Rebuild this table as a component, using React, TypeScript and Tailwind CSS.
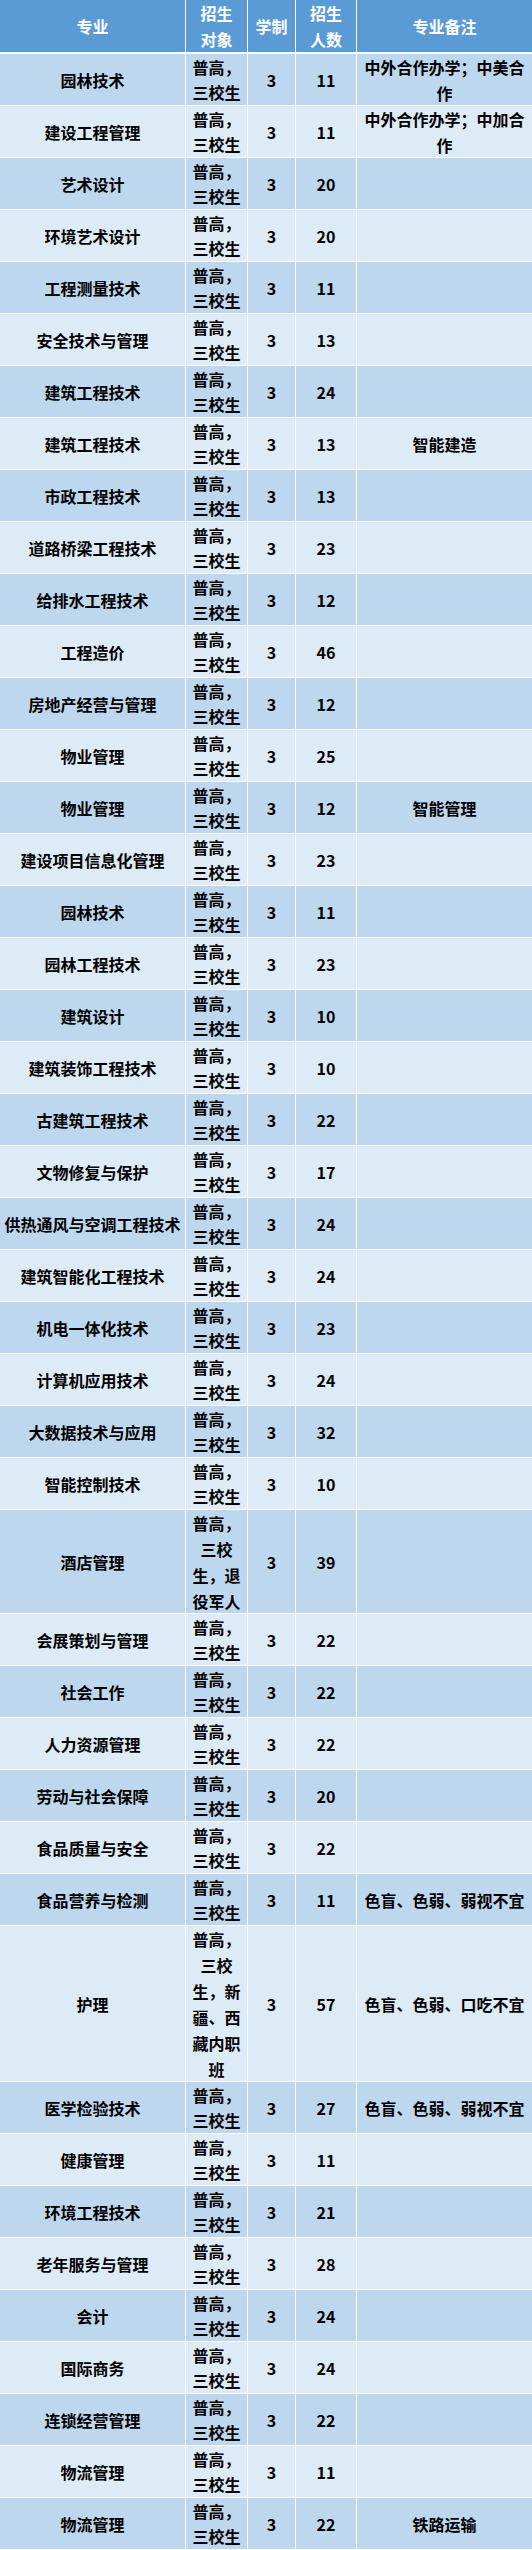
import React from "react";

type Row = {
    name: string;
    target?: string;
    years?: string;
    count: string;
    note?: string;
    size?: 1 | 2 | 3;
};

const DEFAULT_TARGET = "普高，三校生";

const rows: Row[] = [
    { name: "园林技术", count: "11", note: "中外合作办学；中美合作" },
    { name: "建设工程管理", count: "11", note: "中外合作办学；中加合作" },
    { name: "艺术设计", count: "20" },
    { name: "环境艺术设计", count: "20" },
    { name: "工程测量技术", count: "11" },
    { name: "安全技术与管理", count: "13" },
    { name: "建筑工程技术", count: "24" },
    { name: "建筑工程技术", count: "13", note: "智能建造" },
    { name: "市政工程技术", count: "13" },
    { name: "道路桥梁工程技术", count: "23" },
    { name: "给排水工程技术", count: "12" },
    { name: "工程造价", count: "46" },
    { name: "房地产经营与管理", count: "12" },
    { name: "物业管理", count: "25" },
    { name: "物业管理", count: "12", note: "智能管理" },
    { name: "建设项目信息化管理", count: "23" },
    { name: "园林技术", count: "11" },
    { name: "园林工程技术", count: "23" },
    { name: "建筑设计", count: "10" },
    { name: "建筑装饰工程技术", count: "10" },
    { name: "古建筑工程技术", count: "22" },
    { name: "文物修复与保护", count: "17" },
    { name: "供热通风与空调工程技术", count: "24" },
    { name: "建筑智能化工程技术", count: "24" },
    { name: "机电一体化技术", count: "23" },
    { name: "计算机应用技术", count: "24" },
    { name: "大数据技术与应用", count: "32" },
    { name: "智能控制技术", count: "10" },
    { name: "酒店管理", target: "普高，三校生，退役军人", count: "39", size: 2 },
    { name: "会展策划与管理", count: "22" },
    { name: "社会工作", count: "22" },
    { name: "人力资源管理", count: "22" },
    { name: "劳动与社会保障", count: "20" },
    { name: "食品质量与安全", count: "22" },
    { name: "食品营养与检测", count: "11", note: "色盲、色弱、弱视不宜" },
    {
        name: "护理",
        target: "普高，三校生，新疆、西藏内职班",
        count: "57",
        note: "色盲、色弱、口吃不宜",
        size: 3,
    },
    { name: "医学检验技术", count: "27", note: "色盲、色弱、弱视不宜" },
    { name: "健康管理", count: "11" },
    { name: "环境工程技术", count: "21" },
    { name: "老年服务与管理", count: "28" },
    { name: "会计", count: "24" },
    { name: "国际商务", count: "24" },
    { name: "连锁经营管理", count: "22" },
    { name: "物流管理", count: "11" },
    { name: "物流管理", count: "22", note: "铁路运输" },
];

const GRID = "grid grid-cols-[185px_61px_47px_60px_175px] gap-x-px bg-white";
const CELL = "flex items-center justify-center text-center";

export default function App() {
    return (
        <div
            className="w-[532px] bg-white text-[16px] font-bold text-black"
            style={{ fontFamily: '"Noto Sans CJK SC", "Noto Sans", sans-serif' }}
        >
            {/* header */}
            <div className={`${GRID} border-b-2 border-white`}>
                {[
                    ["专业"],
                    ["招生", "对象"],
                    ["学制"],
                    ["招生", "人数"],
                    ["专业备注"],
                ].map((lines, i) => (
                    <div
                        key={i}
                        className={`${CELL} h-[52px] flex-col bg-[#5b9bd5] leading-[26px] text-white`}
                    >
                        {lines.map((l) => (
                            <span key={l}>{l}</span>
                        ))}
                    </div>
                ))}
            </div>

            {rows.map((row, idx) => {
                const bg = idx % 2 === 0 ? "bg-[#bdd7ee]" : "bg-[#ddebf7]";
                const h =
                    row.size === 3
                        ? "h-[155px]"
                        : row.size === 2
                          ? "h-[103px]"
                          : "h-[51px]";
                return (
                    <div key={idx} className={`${GRID} border-b border-white`}>
                        <div className={`${CELL} ${bg} ${h} px-1`}>{row.name}</div>
                        <div
                            className={`${CELL} ${bg} ${h} px-[1px] ${
                                row.size ? "leading-[26px]" : "leading-[25px]"
                            }`}
                        >
                            {row.target ?? DEFAULT_TARGET}
                        </div>
                        <div className={`${CELL} ${bg} ${h}`}>{row.years ?? "3"}</div>
                        <div className={`${CELL} ${bg} ${h}`}>{row.count}</div>
                        <div className={`${CELL} ${bg} ${h} px-[4px] leading-[26px]`}>
                            {row.note ?? ""}
                        </div>
                    </div>
                );
            })}
        </div>
    );
}
